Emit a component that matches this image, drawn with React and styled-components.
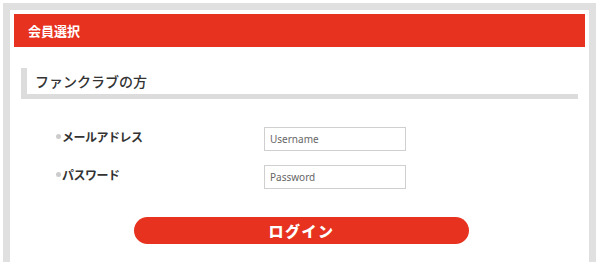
import styled, { createGlobalStyle } from 'styled-components';

const Global = createGlobalStyle`
    body {
        margin: 0;
        background: #fff;
        font-family: "Noto Sans CJK JP", "Noto Sans", sans-serif;
        overflow: hidden;
    }
`;

const Frame = styled.div`
    margin: 3px 4px 0 3px;
    border: 7px solid #e0e0e0;
    border-bottom: none;
    padding: 4px 4px 0 4px;
    height: 248px;
`;

const Header = styled.h1`
    margin: 0;
    height: 33px;
    background: #e6321f;
    color: #fff;
    font-size: 13px;
    font-weight: 700;
    line-height: 33px;
    padding-left: 14px;
`;

const SectionHead = styled.h2`
    margin: 21px 7px 0 7px;
    height: 26px;
    border-left: 6px solid #dcdcdc;
    border-bottom: 5px solid #dcdcdc;
    padding-left: 8px;
    color: #333;
    font-size: 14px;
    font-weight: 500;
    line-height: 26px;
`;

const Form = styled.form`
    display: grid;
    grid-template-columns: 208px 142px;
    row-gap: 14px;
    margin: 28px 0 0 42px;
`;

const Label = styled.label`
    display: flex;
    align-items: center;
    gap: 1px;
    padding-bottom: 6px;
    font-size: 12px;
    font-weight: 700;
    color: #333;
    letter-spacing: -0.5px;

    &::before {
        content: '';
        width: 5px;
        height: 5px;
        border-radius: 50%;
        background: #ccc;
    }
`;

const Input = styled.input`
    box-sizing: border-box;
    width: 142px;
    height: 24px;
    border: 1px solid #cfcfcf;
    padding: 0 5px;
    font-family: "Noto Sans", sans-serif;
    font-size: 10px;
    color: #333;
    outline: none;

    &::placeholder {
        color: #666;
    }
`;

const ButtonRow = styled.div`
    display: flex;
    justify-content: center;
    margin-top: 28px;
    padding-left: 4px;
`;

const LoginButton = styled.button`
    width: 335px;
    height: 27px;
    border: none;
    border-radius: 14px;
    background: #e6321f;
    color: #fff;
    font-family: "Noto Sans CJK JP", sans-serif;
    font-size: 15px;
    font-weight: 900;
    letter-spacing: 1.5px;
    padding: 0;
    line-height: 27px;
`;

export default () => {
    return (
        <>
            <Global />
            <Frame>
                <Header>会員選択</Header>
                <SectionHead>ファンクラブの方</SectionHead>
                <Form onSubmit={e => e.preventDefault()}>
                    <Label>メールアドレス</Label>
                    <Input type='text' placeholder='Username' />
                    <Label>パスワード</Label>
                    <Input type='password' placeholder='Password' />
                </Form>
                <ButtonRow>
                    <LoginButton type='button'>ログイン</LoginButton>
                </ButtonRow>
            </Frame>
        </>
    )
}
